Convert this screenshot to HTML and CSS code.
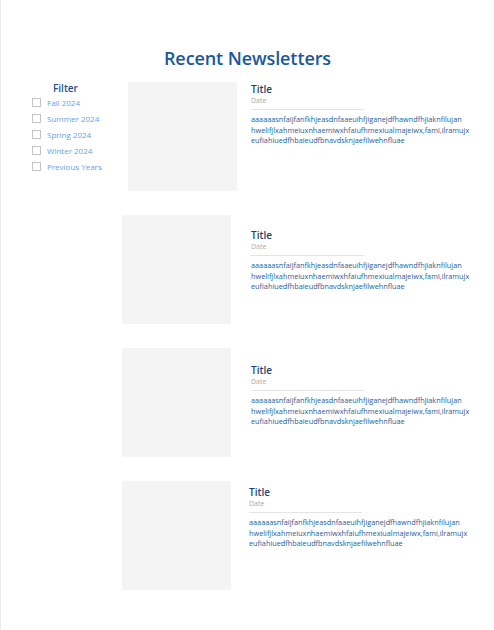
FILE: index.html
```html
<!DOCTYPE html>
<html>
<head>
<meta charset="utf-8">
<link rel="stylesheet" href="styles.css">
</head>
<body>
<div class="page">
  <h1 class="heading">Recent Newsletters</h1>
  <div class="layout">
    <aside class="filter">
      <h2 class="filter-title">Filter</h2>
      <ul class="filter-list">
        <li class="filter-item"><span class="box"></span>Fall 2024</li>
        <li class="filter-item"><span class="box"></span>Summer 2024</li>
        <li class="filter-item"><span class="box"></span>Spring 2024</li>
        <li class="filter-item"><span class="box"></span>Winter 2024</li>
        <li class="filter-item"><span class="box"></span>Previous Years</li>
      </ul>
    </aside>
    <div class="list">
      <article class="item item-1">
        <div class="thumb"></div>
        <div class="info">
          <h3 class="title">Title</h3>
          <div class="date">Date</div>
          <p class="body">aaaaaasnfaijfanfkhjeasdnfaaeuihfjiganejdfhawndfhjiaknfilujan<br>hwelifjlxahmeiuxnhaemiwxhfaiufhmexiualmajeiwx,fami,ilramujx<br>eufiahiuedfhbaieudfbnavdsknjaefilwehnfluae</p>
        </div>
      </article>
      <article class="item item-2">
        <div class="thumb"></div>
        <div class="info">
          <h3 class="title">Title</h3>
          <div class="date">Date</div>
          <p class="body">aaaaaasnfaijfanfkhjeasdnfaaeuihfjiganejdfhawndfhjiaknfilujan<br>hwelifjlxahmeiuxnhaemiwxhfaiufhmexiualmajeiwx,fami,ilramujx<br>eufiahiuedfhbaieudfbnavdsknjaefilwehnfluae</p>
        </div>
      </article>
      <article class="item item-3">
        <div class="thumb"></div>
        <div class="info">
          <h3 class="title">Title</h3>
          <div class="date">Date</div>
          <p class="body">aaaaaasnfaijfanfkhjeasdnfaaeuihfjiganejdfhawndfhjiaknfilujan<br>hwelifjlxahmeiuxnhaemiwxhfaiufhmexiualmajeiwx,fami,ilramujx<br>eufiahiuedfhbaieudfbnavdsknjaefilwehnfluae</p>
        </div>
      </article>
      <article class="item item-4">
        <div class="thumb"></div>
        <div class="info">
          <h3 class="title">Title</h3>
          <div class="date">Date</div>
          <p class="body">aaaaaasnfaijfanfkhjeasdnfaaeuihfjiganejdfhawndfhjiaknfilujan<br>hwelifjlxahmeiuxnhaemiwxhfaiufhmexiualmajeiwx,fami,ilramujx<br>eufiahiuedfhbaieudfbnavdsknjaefilwehnfluae</p>
        </div>
      </article>
    </div>
  </div>
</div>
</body>
</html>
```
FILE: styles.css
```css
html, body {
  margin: 0;
  padding: 0;
  background: #ffffff;
}
body {
  font-family: "Open Sans", "DejaVu Sans", sans-serif;
}
.page {
  min-height: 630px;
  box-sizing: border-box;
  border-left: 1px solid #ececec;
  padding-top: 44px;
}
.heading {
  margin: 0;
  text-align: center;
  font-size: 18px;
  font-weight: 600;
  line-height: 28px;
  color: #1b589b;
  letter-spacing: -0.1px;
}
.layout {
  display: flex;
  margin-top: 10px;
}
.filter {
  width: 90px;
  padding-left: 31px;
  box-sizing: content-box;
  flex: none;
}
.filter-title {
  margin: 0 0 0 21px;
  font-size: 10px;
  font-weight: 600;
  line-height: 12px;
  color: #1d4e8c;
}
.filter-list {
  list-style: none;
  margin: 0;
  padding: 0;
}
.filter-item {
  display: flex;
  align-items: center;
  gap: 6px;
  height: 16px;
  font-size: 8px;
  color: #5fa3ee;
  white-space: nowrap;
}
.box {
  width: 7px;
  height: 7px;
  border: 1px solid #c4c4c4;
  flex: none;
}
.list {
  display: flex;
  flex-direction: column;
}
.item {
  display: flex;
  align-items: flex-start;
  gap: 20px;
  height: 133px;
}
.item-1 {
  margin-left: 6px;
  gap: 14px;
}
.thumb {
  width: 109px;
  height: 109px;
  background: #f4f4f4;
  border-radius: 2px;
  flex: none;
}
.info {
  width: 224px;
}
.item-1 .info { padding-top: 1px; }
.item-2 .info { padding-top: 14px; }
.item-3 .info { padding-top: 16px; }
.item-4 .info { padding-top: 5px; margin-left: -2px; }
.title {
  margin: 0;
  font-size: 10px;
  font-weight: 600;
  line-height: 12px;
  color: #1c3f6f;
}
.date {
  font-size: 7px;
  line-height: 11px;
  color: #a9a9a9;
  width: 113px;
  padding-bottom: 3px;
  border-bottom: 1px solid #e4e4e4;
}
.body {
  margin: 4px 0 0;
  font-size: 7.3px;
  line-height: 10.5px;
  color: #2a5c98;
  white-space: nowrap;
}
```
